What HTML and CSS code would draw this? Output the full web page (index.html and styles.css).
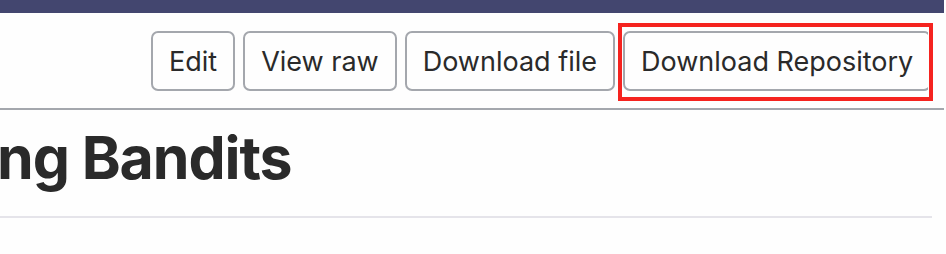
FILE: index.html
```html
<!DOCTYPE html>
<html lang="en">
<head>
<meta charset="utf-8">
<title>File view</title>
<link rel="stylesheet" href="styles.css">
</head>
<body>
<div class="page">
  <div class="topbar"></div>
  <div class="toolbar">
    <div class="actions">
      <a class="btn">Edit</a>
      <a class="btn">View raw</a>
      <a class="btn">Download file</a>
      <a class="btn btn-repo">Download Repository</a>
    </div>
    <div class="highlight"></div>
  </div>
  <h1 class="title">ng Bandits</h1>
</div>
</body>
</html>
```
FILE: styles.css
```css
html, body {
  margin: 0;
  padding: 0;
  background: #fefefe;
}
.page {
  width: 944px;
  font-family: Inter, "Noto Sans", "Liberation Sans", sans-serif;
  color: #2a2a2a;
}
.topbar {
  height: 13px;
  background: #43466f;
}
.toolbar {
  position: relative;
  display: flex;
  justify-content: flex-end;
  padding: 18px 16px 17px 0;
  border-bottom: 2px solid #a4a7ad;
}
.actions {
  display: flex;
  gap: 8px;
  width: 777px;
  overflow: hidden;
}
.btn {
  flex: none;
  display: flex;
  align-items: center;
  height: 56px;
  padding: 0 16px;
  border: 2px solid #a4a7ad;
  border-radius: 7px;
  font-size: 27px;
  color: #2a2a2a;
  background: #fefefe;
}
.highlight {
  position: absolute;
  left: 618px;
  top: 10px;
  width: 307px;
  height: 70px;
  border: 4px solid #f5231f;
}
.title {
  margin: 0 12px 0 -3px;
  padding: 15px 0 25px;
  font-size: 59px;
  font-weight: 700;
  line-height: 66px;
  letter-spacing: -1.1px;
  border-bottom: 2px solid #e5e4ea;
  color: #2a2a2a;
}
```
